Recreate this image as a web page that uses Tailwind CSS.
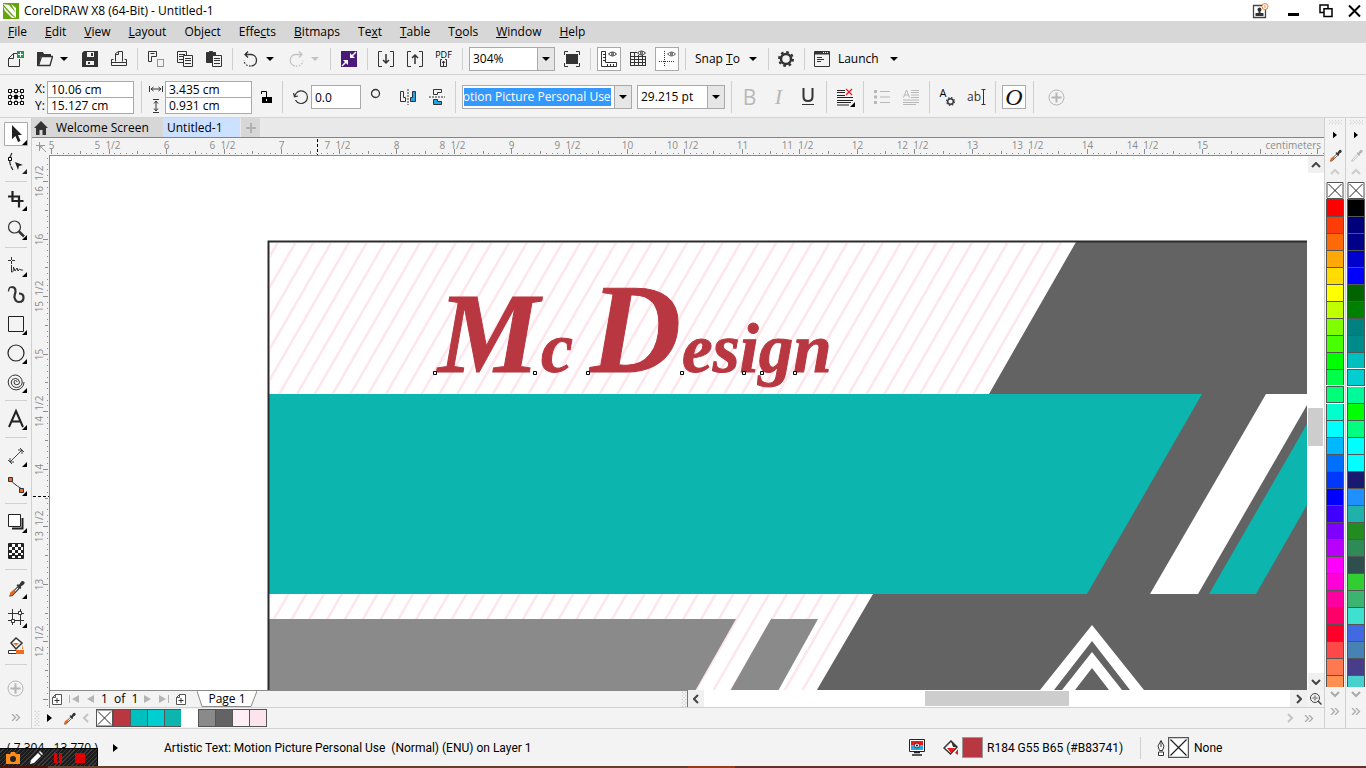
<!DOCTYPE html>
<html lang="en">
<head>
<meta charset="utf-8">
<title>CorelDRAW X8 (64-Bit) - Untitled-1</title>
<script src="https://cdn.jsdelivr.net/npm/@tailwindcss/browser@4"></script>
</head>
<body class="flex h-screen flex-col overflow-hidden bg-[#f3f3f3] font-['Open_Sans','Noto_Sans',sans-serif] text-[12px] leading-4 text-black">

<svg class="hidden">
  <symbol id="drop" viewBox="0 0 16 16"><path d="M2.5 13.5L9 6.5l1.500 1.500L4 14.500l-2 .5z" fill="#fff" stroke="#333"/><path d="M1 15l1.500-3.500 3-2.500L7 11l-3 3z" fill="#e8651a"/><path d="M8 5l1-1 1.500.5L12 2q1.500-1.800 3-.5T14.500 4.500L12 6l.5 1.500-1 1z" fill="#333"/></symbol>
  <symbol id="dropgray" viewBox="0 0 16 16"><path d="M2.500 13.500L9 6.500l1.500 1.500L4 14.500l-2 .5z" fill="#f8f8f8" stroke="#b5b5b5"/><path d="M8 5l1-1 1.500.5L12 2q1.500-1.800 3-.5T14.500 4.500L12 6l.5 1.500-1 1z" fill="#b5b5b5"/></symbol>
  <symbol id="caret" viewBox="0 0 10 6"><path d="M1 1h8L5 5z"/></symbol>
  <symbol id="none" viewBox="0 0 17 17"><path d="M.5.5h16v16H.5z" fill="#fff" stroke="#555"/><path d="M2 2l13 13M15 2L2 15" stroke="#222"/></symbol>
  <symbol id="dots" viewBox="0 0 18 8"><path d="M1 1h17M3 3h15M1 5h17" stroke="#a9a9a9" stroke-dasharray="1 3"/></symbol>
  <symbol id="vdots" viewBox="0 0 6 18"><path d="M1 1v17M3 3v15M5 1v17" stroke="#a9a9a9" stroke-dasharray="1 3"/></symbol>
  <symbol id="gear" viewBox="0 0 16 16"><circle cx="8" cy="8" r="5" fill="none" stroke="#333" stroke-width="2.500"/><circle cx="8" cy="8" r="7" fill="none" stroke="#333" stroke-width="2" stroke-dasharray="2.750 2.750"/></symbol>
  <symbol id="plus" viewBox="0 0 17 17"><circle cx="8.500" cy="8.500" r="7.500" fill="none" stroke="#b5b5b5"/><path d="M8.500 3.500v10M3.500 8.500h10" stroke="#b5b5b5" stroke-width="2"/></symbol>
  <symbol id="pageadd" viewBox="0 0 10 11"><path d="M3.500.5h6v10h-9v-7zM.5 3.500h3v-3" fill="#fff" stroke="#555"/><path d="M5 4v5M2.500 6.500h5" stroke="#333"/></symbol>
</svg>

<!-- Title bar -->
<header class="flex h-[21px] shrink-0 items-center bg-white pr-[5px]">
  <svg class="ml-[3px] size-4" viewBox="0 0 16 16"><path d="M0 0h16v16H0z" fill="#62a60a"/><path d="M0 1l6 1 7 8v5L9 11zM0 3l8 9 4 3H9L2 8zM8 1l5 4v5z" fill="#fff"/></svg>
  <h1 class="ml-[5px] flex-1">CorelDRAW X8 (64-Bit) - Untitled-1</h1>
  <button aria-label="Account" class="mr-[18px]"><svg class="h-4 w-[17px]" viewBox="0 0 17 16"><path d="M1.500 2.500h12v12h-12z" fill="#fff" stroke="#444" stroke-width="1.300"/><circle cx="7.500" cy="6.500" r="2" fill="#333"/><path d="M6.500 8h2v2h3v3h-8v-3h3z" fill="#333"/><circle cx="13" cy="3.500" r="3" fill="#fff" stroke="#f08030"/><path d="M13 2v3" stroke="#f08030"/></svg></button>
  <button aria-label="Minimize" class="mr-[18px]"><svg class="size-3.5" viewBox="0 0 14 14"><path d="M1 9h11v3H1z"/></svg></button>
  <button aria-label="Restore" class="mr-3.5"><svg class="size-3.5" viewBox="0 0 14 14" fill="none" stroke="#000" stroke-width="1.500"><path d="M4.500 8.500h-3.500v-7.500h8v3.500M5 4.800h8V12.500H5z"/></svg></button>
  <button aria-label="Close"><svg class="size-3.5" viewBox="0 0 14 14" stroke="#000" stroke-width="2"><path d="M2 1.500l11 11M13 1.500l-11 11"/></svg></button>
</header>

<!-- Menu bar -->
<nav class="flex h-[22px] shrink-0 items-center gap-[18px] bg-[#d7d7d7] pl-2">
  <button><u>F</u>ile</button><button><u>E</u>dit</button><button><u>V</u>iew</button><button><u>L</u>ayout</button><button>Ob<u>j</u>ect</button><button>Effe<u>c</u>ts</button><button><u>B</u>itmaps</button><button>Te<u>x</u>t</button><button><u>T</u>able</button><button>T<u>o</u>ols</button><button><u>W</u>indow</button><button><u>H</u>elp</button>
</nav>

<!-- Standard toolbar -->
<div role="toolbar" aria-label="Standard" class="flex h-8 shrink-0 items-center border-b border-[#d4d4d4] pl-px [&>i]:h-[22px] [&>i]:w-px [&>i]:mx-[4px] [&>i]:mr-[3px] [&>i]:bg-[#cfcfcf] [&>button]:flex [&>button]:h-6 [&>button]:items-center [&>button]:justify-center">
  <button aria-label="New" class="w-[29px]"><svg class="size-4" viewBox="0 0 16 16"><path d="M9 2.500H5.500l-5 5v8h11V8M.5 7.500h5v-5" fill="none" stroke="#333"/><path d="M9 0h7v7H9z" fill="#12a04a"/><path d="M12.500 1v5M10 3.500h5" stroke="#fff"/></svg></button>
  <button aria-label="Open" class="w-[29px]"><svg class="size-4" viewBox="0 0 16 16"><path d="M0 1h6l1 2h7v2H4L1.500 15H0z" fill="#333"/><path d="M4.500 5.500h11l-2.500 9H1.500z" fill="#f3f3f3" stroke="#333" stroke-width="1.300"/></svg></button>
  <button aria-label="Open recent" class="w-4 pr-1.5"><svg class="h-1.5 w-2.5"><use href="#caret"/></svg></button>
  <button aria-label="Save" class="w-[29px]"><svg class="size-4" viewBox="0 0 16 16"><path d="M2 0h14v16H0V2z" fill="#333"/><path d="M5 1h7v5H5zM4 10h8v4H4z" fill="#f3f3f3"/><path d="M9 2h2v3H9zM6 11h2v2H6z" fill="#333"/></svg></button>
  <button aria-label="Print" class="w-[29px]"><svg class="size-4" viewBox="0 0 16 16" fill="none" stroke="#333"><path d="M4.500 10.500v-8l3-2h4v10M4.500 3.500h3v-3M2.500 8.500h-2v6h15v-6h-2M.5 11.500h15"/></svg></button>
  <i></i>
  <button aria-label="Cut" class="w-[29px]"><svg class="size-4" viewBox="0 0 16 16" fill="none" stroke="#333"><path d="M.5.5h8v5h-5v5h-3zM2.500 2.500h4"/><path d="M9.500 8.500v7h6v-7z" stroke-dasharray="1 1"/></svg></button>
  <button aria-label="Copy" class="w-[29px]"><svg class="size-4" viewBox="0 0 16 16" stroke="#333"><path d="M.5.5h9v11h-9z" fill="none"/><path d="M2 3.500h6M2 5.500h6M2 8.500h4"/><path d="M6.500 4.500h9v11h-9z" fill="#f3f3f3"/><path d="M8 7.500h6M8 9.500h6M8 12.500h6"/></svg></button>
  <button aria-label="Paste" class="w-[29px]"><svg class="size-4" viewBox="0 0 16 16" stroke="#333"><path d="M.5 1.500h3v-1h3v1h3v10h-9z" fill="#333"/><path d="M6.500 4.500h9v11h-9z" fill="#f3f3f3"/><path d="M8 7.500h6M8 9.500h6M8 12.500h6"/></svg></button>
  <i></i>
  <button aria-label="Undo" class="w-[29px]"><svg class="size-4" viewBox="0 0 16 16" fill="none" stroke="#333" stroke-width="1.300"><path d="M5 .5l-3 3 3 3M2 3.500h6.500a5.800 5.800 0 010 11.500"/><path d="M7.500 15A6 6 0 011 9.500" stroke-dasharray="1.500 1.500"/></svg></button>
  <button aria-label="Undo list" class="w-4 pr-1.5"><svg class="h-1.5 w-2.5"><use href="#caret"/></svg></button>
  <button aria-label="Redo" class="w-[29px]"><svg class="size-4" viewBox="0 0 16 16" fill="none" stroke="#c4c4c4" stroke-width="1.300"><path d="M11 .5l3 3-3 3M14 3.500H7.500a5.800 5.800 0 00-.5 11.500"/><path d="M8 15a6 6 0 007-5.500" stroke-dasharray="1.500 1.500"/></svg></button>
  <button aria-label="Redo list" class="w-4 pr-1.5"><svg class="h-1.5 w-2.5 fill-[#c4c4c4]"><use href="#caret"/></svg></button>
  <i></i>
  <button aria-label="Search content" class="w-[29px]"><svg class="size-4" viewBox="0 0 16 16"><path d="M0 0h16v16H0z" fill="#4b1a7a"/><path d="M15 1l-4 4M1 15l4-4" stroke="#fff" stroke-width="1.500"/><path d="M9 2v5h5zM2 9h5v5z" fill="#fff"/></svg></button>
  <i></i>
  <button aria-label="Import" class="w-[29px]"><svg class="size-4" viewBox="0 0 16 16" fill="none" stroke="#333"><path d="M4 .5H.5v15H4M12 .5h3.500v15H12"/><path d="M8 3v9M5 9l3 3 3-3" stroke-width="1.500"/></svg></button>
  <button aria-label="Export" class="w-[29px]"><svg class="size-4" viewBox="0 0 16 16" fill="none" stroke="#333"><path d="M4 .5H.5v15H4M12 .5h3.500v15H12"/><path d="M8 4v9M5 7l3-3 3 3" stroke-width="1.500"/></svg></button>
  <button aria-label="Publish to PDF" class="w-[29px] flex-col"><span class="text-[9px] leading-[8px]">PDF</span><svg class="h-2 w-[7px]" viewBox="0 0 7 8" fill="none" stroke="#333"><path d="M2 .5H.5v7h6v-7H5M3.500 7V2M2 4l1.500-2L5 4"/></svg></button>
  <i></i>
  <div class="relative ml-[3px] h-6 w-[86px]">
    <select aria-label="Zoom level" class="h-6 w-full appearance-none border border-[#a9a9a9] bg-white pl-[3px]"><option>304%</option></select>
    <span class="pointer-events-none absolute inset-y-px right-px flex w-[17px] items-center justify-center border-l border-[#a9a9a9] bg-[#e6e6e6]"><svg class="h-1.5 w-2.5"><use href="#caret"/></svg></span>
  </div>
  <button aria-label="Full-screen preview" class="ml-[2px] w-[29px]"><svg class="size-4" viewBox="0 0 16 16"><path d="M2 3h12v10H2z" fill="#333"/><path d="M.5 4V.5H4M12 .5h3.500V4M.5 12v3.500H4M12 15.500h3.500V12" fill="none" stroke="#333"/></svg></button>
  <i></i>
  <button aria-label="Show rulers" class="mx-[3px] w-6 border border-[#a9a9a9] bg-white"><svg class="size-[18px]" viewBox="0 0 18 18" fill="none" stroke="#333"><path d="M1.500 1.500h4v11h11v4h-15zM3 4.500h2M3 7.500h2M3 10.500h2M7.500 14v2M10.500 14v2M13.500 14v2"/><path d="M8.500 4q4-4 8 0q-4 4-8 0z"/><circle cx="12.500" cy="4" r="1"/></svg></button>
  <button aria-label="Show grid" class="w-7"><svg class="size-[18px]" viewBox="0 0 18 18" fill="none" stroke="#333"><path d="M1.500 2v14M5.500 2v14M9.500 5v11M13.500 5v11M16.500 6v10M1 2.500h7M1 6.500h16M1 9.500h16M1 12.500h16M1 15.500h16"/><path d="M8.500 3q4-4 8 0q-4 4-8 0z" fill="#f3f3f3"/><circle cx="12.500" cy="3" r="1"/></svg></button>
  <button aria-label="Show guidelines" class="mx-[3px] w-6 border border-[#a9a9a9] bg-white"><svg class="size-[18px]" viewBox="0 0 18 18" fill="none" stroke="#333"><path d="M6.500 1v16M1 11.500h16" stroke-dasharray="1 1"/><path d="M9.500 4q4-4 8 0q-4 4-8 0z" stroke-width=".8"/><circle cx="13.500" cy="4" r="1"/></svg></button>
  <i class="!ml-[3px]"></i>
  <button class="gap-2 px-1.5"><span>Snap <u>T</u>o</span><svg class="h-1.5 w-2.5"><use href="#caret"/></svg></button>
  <i></i>
  <button aria-label="Options" class="w-[29px]"><svg class="size-4"><use href="#gear"/></svg></button>
  <i class="!ml-[3px]"></i>
  <button class="gap-2 pl-1.5"><svg class="size-4" viewBox="0 0 16 16" fill="none" stroke="#333"><path d="M.5.5h15v15H.5z"/><path d="M1 2h14" stroke-width="3"/><path d="M9 1.500h6" stroke="#fff" stroke-dasharray="1 1"/><path d="M3 6.500h5M3 8.500h7M3 10.500h4"/></svg>Launch<svg class="ml-0.5 h-1.5 w-2.5"><use href="#caret"/></svg></button>
</div>

<!-- Property bar -->
<div role="toolbar" aria-label="Properties" class="flex h-[43px] shrink-0 items-center border-b border-[#d4d4d4] pl-px pt-[2px] [&>i]:h-8 [&>i]:w-px [&>i]:mx-[4px] [&>i]:mr-[3px] [&>i]:bg-[#cfcfcf] [&>button]:flex [&>button]:h-6 [&>button]:items-center [&>button]:justify-center">
  <button aria-label="Object origin" class="w-[29px]"><svg class="size-4" viewBox="0 0 16 16" fill="none" stroke="#000"><path d="M2 2.500h12M2 7.500h12M2 13.500h12M2.500 2v12M8 2v12M13.500 2v12" stroke="#777"/><path d="M.5.5h3v3h-3zM6.500.5h3v3h-3zM12.500.5h3v3h-3zM.5 6.500h3v3h-3zM12.500 6.500h3v3h-3zM.5 12.500h3v3h-3zM6.500 12.500h3v3h-3zM12.500 12.500h3v3h-3z" fill="#f3f3f3"/><path d="M6.500 6.500h3v3h-3z" fill="#000"/></svg></button>
  <div class="ml-[5px] grid grid-cols-[12px_87px] items-center leading-4">
    <label for="px">X:</label><input id="px" value="10.06 cm" class="h-[17px] border border-[#a9a9a9] bg-white px-[3px]">
    <label for="py">Y:</label><input id="py" value="15.127 cm" class="-mt-px h-[17px] border border-[#a9a9a9] bg-white px-[3px]">
  </div>
  <i class="!ml-[7px]"></i>
  <div class="ml-1 grid grid-cols-[16px_87px] items-center leading-4">
    <label for="ow" aria-label="Width"><svg class="size-3.5" viewBox="0 0 14 14" fill="none" stroke="#333"><path d="M.5 4v6M13.500 4v6M2 7h10M4.500 5L2 7l2.500 2M9.500 5L12 7 9.500 9"/></svg></label><input id="ow" value="3.435 cm" class="h-[17px] border border-[#a9a9a9] bg-white px-[3px]">
    <label for="oh" aria-label="Height"><svg class="size-3.5" viewBox="0 0 14 14" fill="none" stroke="#333"><path d="M4 .5h6M4 13.500h6M7 2v10M5 4.500L7 2l2 2.500M5 9.500L7 12l2-2.500"/></svg></label><input id="oh" value="0.931 cm" class="-mt-px h-[17px] border border-[#a9a9a9] bg-white px-[3px]">
  </div>
  <button aria-label="Lock ratio" class="w-7"><svg class="h-3.5 w-3" viewBox="0 0 12 14"><path d="M2 7h10v6H2z"/><path d="M1.500 4V1.500h5V7" fill="none" stroke="#000"/><path d="M6.500 9v2" stroke="#fff"/></svg></button>
  <i class="!mx-[2px]"></i>
  <label for="rot" aria-label="Rotation" class="ml-2"><svg class="size-4" viewBox="0 0 16 16" fill="none" stroke="#333" stroke-width="1.200"><path d="M2.500 11A6.300 6.300 0 103 4.500l-1.500 3M.5 4l1 3.800L5 7"/></svg></label>
  <input id="rot" value="0.0" class="ml-[2px] h-6 w-[50px] border border-[#a9a9a9] bg-white px-[3px]">
  <svg class="ml-[9px] mb-2 size-[11px]" viewBox="0 0 11 11"><circle cx="5.500" cy="5.500" r="4" fill="none" stroke="#333" stroke-width="1.300"/></svg>
  <button aria-label="Mirror horizontally" class="ml-3 w-[29px]"><svg class="size-4" viewBox="0 0 16 16" fill="none" stroke="#333"><path d="M.5 2.500h3v6h2v4h-5z"/><path d="M8 0v16" stroke-dasharray="2 1"/><path d="M15.500 2.500h-3v6h-2v4h5z" fill="#22a5e6"/></svg></button>
  <button aria-label="Mirror vertically" class="w-[29px]"><svg class="size-4" viewBox="0 0 16 16" fill="none" stroke="#333"><path d="M4.500.5h8v3h-4v2h-4z"/><path d="M0 8h16" stroke-dasharray="2 1"/><path d="M4.500 10.500h4v2h4v3h-8z" fill="#22a5e6"/></svg></button>
  <i></i>
  <div class="relative ml-[3px] h-6 w-[170px]">
    <div class="h-6 overflow-hidden border border-[#a9a9a9] bg-white py-[2px] pl-px pr-[20px]"><select aria-label="Font" class="block h-[18px] w-full appearance-none bg-[#3399ff] indent-[-12px] leading-[18px] text-white"><option>Motion Picture Personal Use</option></select></div>
    <span class="pointer-events-none absolute inset-y-px right-px flex w-[17px] items-center justify-center border-l border-[#a9a9a9] bg-[#e6e6e6]"><svg class="h-1.5 w-2.5"><use href="#caret"/></svg></span>
  </div>
  <div class="relative ml-[5px] h-6 w-[88px]">
    <select aria-label="Font size" class="h-6 w-full appearance-none border border-[#a9a9a9] bg-white pl-[3px]"><option>29.215 pt</option></select>
    <span class="pointer-events-none absolute inset-y-px right-px flex w-[17px] items-center justify-center border-l border-[#a9a9a9] bg-[#e6e6e6]"><svg class="h-1.5 w-2.5"><use href="#caret"/></svg></span>
  </div>
  <i class="!ml-[6px]"></i>
  <button aria-label="Bold" class="w-[29px] text-[21px] font-medium text-[#b8b8b8]">B</button>
  <button aria-label="Italic" class="w-[29px] font-['Liberation_Serif',serif] text-[22px] italic text-[#b8b8b8]">I</button>
  <button aria-label="Underline" class="w-[29px]"><svg class="h-[18px] w-3.5" viewBox="0 0 14 18" fill="none" stroke="#333"><path d="M2.500 0v8.500q0 4.500 4.500 4.500t4.500-4.500V0" stroke-width="2"/><path d="M1 16.500h12"/></svg></button>
  <i></i>
  <button aria-label="Text alignment" class="w-[29px]"><svg class="size-5" viewBox="0 0 20 20"><path d="M2 3.500h8M2 5.500h8M2 8.500h8M2 10.500h16M2 13.500h16M2 15.500h14M2 18h12" stroke="#222"/><path d="M11 2l6 6M17 2l-6 6" stroke="#f01020" stroke-width="1.200"/><path d="M20 15v5h-5z"/></svg></button>
  <i></i>
  <button aria-label="Bulleted list" class="w-[29px]"><svg class="size-4" viewBox="0 0 16 16"><path d="M0 1h3v3H0zM0 6.500h3v3H0zM0 12h3v3H0z" fill="#b8b8b8"/><path d="M6 2.500h10M6 8h10M6 13.500h10" stroke="#b8b8b8"/></svg></button>
  <button aria-label="Drop cap" class="w-[29px]"><svg class="size-4" viewBox="0 0 16 16" fill="none" stroke="#b8b8b8"><path d="M.5 8.500L3.500 1l3 7.500M1.500 6h4M8 1.500h8M8 3.500h8M8 6h8M8 8.500h8M0 11h16M0 13.500h16M0 15.500h13"/></svg></button>
  <i></i>
  <button aria-label="Text properties" class="w-[29px]"><span class="mb-2 text-[11px]">A</span><svg class="mt-2 size-[9px]"><use href="#gear"/></svg></button>
  <button aria-label="Edit text" class="w-[29px] text-[#333]">ab<svg class="h-4 w-[5px]" viewBox="0 0 5 16" fill="none" stroke="#333"><path d="M.5.5h4M.5 15.500h4M2.500 1v14"/></svg></button>
  <i></i>
  <button aria-label="OpenType" class="mx-[3px] w-6 border border-[#a9a9a9] bg-white font-['Liberation_Serif',serif] text-[24px] italic text-[#111]">O</button>
  <i></i>
  <button aria-label="Quick customize" class="ml-[5px] w-[29px]"><svg class="size-[17px]"><use href="#plus"/></svg></button>
</div>

<!-- Workspace -->
<main class="flex min-h-0 flex-1">
  <div role="toolbar" aria-label="Toolbox" class="flex w-8 shrink-0 flex-col items-center border-r border-[#d0d0d0] pt-px [&>i]:h-px [&>i]:w-[22px] [&>i]:my-[4px] [&>i]:mb-[3px] [&>i]:shrink-0 [&>i]:bg-[#d0d0d0] [&>button]:flex [&>button]:h-[29px] [&>button]:shrink-0 [&>button]:items-center [&>button]:w-full [&>button]:justify-center">
    <button aria-label="Pick"><svg class="size-6" viewBox="0 0 24 24"><path d="M.5.5h23v23H.5z" fill="#fff" stroke="#a9a9a9"/><path d="M8 3v14l3.500-3 2.500 6 2.500-1-2.500-6h4z" fill="#222"/><path d="M23 18v5h-5z"/></svg></button>
    <button aria-label="Shape"><svg class="size-6" viewBox="0 0 24 24"><path d="M8 2Q3 10 9 19" fill="none" stroke="#333" stroke-width="1.300" stroke-dasharray="6 1"/><path d="M4.500 6.500h3v3h-3z" fill="#fff" stroke="#000"/><path d="M11 11l8 3-4 1-1 4zM23 18v5h-5z" fill="#222"/></svg></button>
    <i></i>
    <button aria-label="Crop"><svg class="size-6" viewBox="0 0 24 24"><path d="M8.500 3v10h11M4 8.500h11v11" fill="none" stroke="#222" stroke-width="2.200"/><path d="M23 18v5h-5z"/></svg></button>
    <button aria-label="Zoom"><svg class="size-6" viewBox="0 0 24 24"><circle cx="10.500" cy="10" r="6" fill="none" stroke="#333" stroke-width="1.200"/><path d="M15 14.500l5 5" stroke="#333" stroke-width="2.500"/><path d="M23 18v5h-5z"/></svg></button>
    <i></i>
    <button aria-label="Freehand"><svg class="size-6" viewBox="0 0 24 24" fill="none" stroke="#333"><path d="M7.500 3v3m0 1v3M4 6.500h3m1 0h3M7.500 11v7q2 1 2-5l1.500 4 2-3 1 3 1.500-2 1.500 1h2"/><path d="M23 18v5h-5z" fill="#000" stroke="none"/></svg></button>
    <button aria-label="Artistic media"><svg class="size-6" viewBox="0 0 24 24" fill="none" stroke="#333"><path d="M4.500 8.500q0-4.500 3.500-4.500" stroke-width="1.300"/><path d="M7.500 4q4 0 4 4 0 2-.8 4t.3 4q1 3 4 3 4.500 0 4.500-4.500 0-4-4.500-4" stroke-width="2.200"/></svg></button>
    <button aria-label="Rectangle"><svg class="size-6" viewBox="0 0 24 24"><path d="M4.500 4.500h15v15h-15z" fill="none" stroke="#222"/><path d="M23 18v5h-5z"/></svg></button>
    <button aria-label="Ellipse"><svg class="size-6" viewBox="0 0 24 24"><circle cx="12" cy="12" r="8" fill="none" stroke="#222" stroke-width="1.200"/><path d="M23 18v5h-5z"/></svg></button>
    <button aria-label="Spiral"><svg class="size-6" viewBox="0 0 24 24"><path d="M13 12a1.500 1.500 0 00-3 0a2.700 2.700 0 005.500 0a4.200 4.200 0 00-8.300 0a5.500 5.500 0 0011 0a7 7 0 00-14 0a7.900 7.900 0 0015.800 0" fill="none" stroke="#333"/><path d="M23 18v5h-5z"/></svg></button>
    <i></i>
    <button aria-label="Text"><svg class="size-6" viewBox="0 0 24 24"><path d="M5 20L12 4l7 16M7.500 14.500h9" fill="none" stroke="#222" stroke-width="2"/><path d="M23 18v5h-5z"/></svg></button>
    <i></i>
    <button aria-label="Dimension"><svg class="size-6" viewBox="0 0 24 24" fill="none" stroke="#444"><path d="M6 18L18 6M4 16l4 4M16 4l4 4M6 14v4h4M14 6h4v4"/><path d="M23 18v5h-5z" fill="#000" stroke="none"/></svg></button>
    <button aria-label="Connector"><svg class="size-6" viewBox="0 0 24 24" stroke="#333"><path d="M6 6q2 4 12 10" fill="none"/><path d="M4.500 4.500h4v4h-4zM15.500 15.500h4v4h-4z" fill="#f26a1b"/><path d="M23 18v5h-5z" stroke="none"/></svg></button>
    <i></i>
    <button aria-label="Drop shadow"><svg class="size-6" viewBox="0 0 24 24" fill="none" stroke="#222"><path d="M18.500 8v10.500H8" stroke-width="2"/><path d="M4.500 4.500h12v12h-12z" fill="#fff"/><path d="M23 18v5h-5z" fill="#000" stroke="none"/></svg></button>
    <button aria-label="Transparency"><svg class="size-4" viewBox="0 0 16 16"><path d="M.5.5h15v15H.5z" fill="#fff" stroke="#222"/><path d="M1 2.500h14M1 8.500h14M1 13.500h14" stroke="#222" stroke-width="3" stroke-dasharray="3 3"/><path d="M4 5.500h11M4 11.500h11" stroke="#222" stroke-width="3" stroke-dasharray="3 3"/></svg></button>
    <i></i>
    <button aria-label="Color eyedropper"><svg class="size-6" viewBox="0 0 24 24"><use href="#drop" x="4" y="4" width="17" height="17"/><path d="M23 18v5h-5z"/></svg></button>
    <button aria-label="Mesh fill"><svg class="size-6" viewBox="0 0 24 24" fill="none" stroke="#333"><path d="M8.500 4v16M16.500 4v16M4 8.500h16M4 15.500h16"/><path d="M14.500 6.500h3v3h-3zM7.500 14.500h3v3h-3z" fill="#fff"/><path d="M23 18v5h-5z" fill="#000" stroke="none"/></svg></button>
    <button aria-label="Smart fill"><svg class="size-6" viewBox="0 0 24 24"><path d="M7 9l5-5 6 5-6 6z" fill="#fff" stroke="#333" stroke-width="1.500"/><path d="M9 9h6l-3 3zM19 10v5h-1z" fill="#f26a1b"/><path d="M4.500 16.500h15v3h-15z" fill="#fff" stroke="#333"/><path d="M12 16h8v4h-8z" fill="#f26a1b"/></svg></button>
    <i></i>
    <button aria-label="Customize toolbox" class="mt-1.5"><svg class="size-[17px]"><use href="#plus"/></svg></button>
    <button aria-label="More tools"><svg class="h-[7px] w-2.5" viewBox="0 0 10 7" fill="none" stroke="#aaa" stroke-width="1.300"><path d="M1 0l3.500 3.500L1 7M5 0l3.500 3.500L5 7"/></svg></button>
  </div>

  <section class="flex min-w-0 flex-1 flex-col">
    <div role="tablist" class="flex h-5 shrink-0 items-stretch border-b border-[#1ea4e8] bg-[#e9e9e9]">
      <button role="tab" class="flex w-[131px] items-center gap-2 bg-[#d7d7d7] pl-[2px]"><svg class="size-3.5" viewBox="0 0 14 14"><path d="M7 0l7 7h-2v7H8.500V9h-3v5H2V7H0z" fill="#333"/></svg>Welcome Screen</button>
      <button role="tab" aria-selected="true" class="w-[77px] bg-[#cce0ff] pl-1 text-left">Untitled-1</button>
      <button aria-label="New document" class="ml-px flex w-[19px] items-center justify-center bg-[#d7d7d7]"><svg class="size-2.5" viewBox="0 0 10 10" stroke="#b0b0b0" stroke-width="2"><path d="M5 0v10M0 5h10"/></svg></button>
    </div>
    <svg id="hruler" class="block h-[18px] w-full shrink-0 bg-[#f3f3f3] text-[10px]"></svg>
    <div class="flex min-h-0 flex-1">
      <svg id="vruler" class="block h-full w-[18px] shrink-0 bg-[#f3f3f3] text-[10px]"></svg>
      <div class="flex min-w-0 flex-1 flex-col">
        <div class="flex min-h-0 flex-1">
          <svg class="block h-full min-w-0 flex-1 bg-white" role="img" aria-label="Drawing page">
            <defs><pattern id="hatch" width="17.800" height="40" patternUnits="userSpaceOnUse" patternTransform="translate(276 243) skewX(-30)"><path d="M0 0h3v40H0z" fill="#fde6ec"/></pattern></defs>
            <g transform="translate(-50 -156)">
              <path d="M268 241h1039v460H268z" fill="#fff"/>
              <path d="M270 243h806L809 704H270z" fill="url(#hatch)"/>
              <path d="M1076 242H1307V700H811L873 594 989 394z" fill="#636363"/>
              <path d="M269 394H1202L1087 594H269z" fill="#0cb5ae"/>
              <path d="M1266 394H1307V405L1198 594H1150z" fill="#fff"/>
              <path d="M1307 424V505L1256 594H1209z" fill="#0cb5ae"/>
              <path d="M269 619H736L690 700H269zM771 619H818L773 700H725z" fill="#8a8a8a"/>
              <path d="M1092 625L1040 690H1054L1092 641 1130 690H1144zM1092 652L1062 690H1075L1092 668 1109 690H1122z" fill="#fff"/>
              <path d="M268.500 701V241.500H1307" fill="none" stroke="#2b2b2b" stroke-width="2"/>
              <text y="372" fill="#b83741" stroke="#b83741" stroke-width="1" class="font-['Liberation_Serif',serif] font-bold italic"><tspan x="438" class="text-[114px]">M</tspan><tspan x="541" class="text-[72px]">c</tspan><tspan class="text-[48px]"> </tspan><tspan x="590" class="text-[126px]">D</tspan><tspan x="682" class="text-[69px]">esign</tspan></text>
              <path d="M433.500 371.500h3v3h-3zM533.500 371.500h3v3h-3zM586.500 371.500h3v3h-3zM680.500 371.500h3v3h-3zM742.500 371.500h3v3h-3zM760.500 371.500h3v3h-3zM793.500 371.500h3v3h-3z" fill="#fff" stroke="#000"/>
            </g>
          </svg>
          <div class="flex w-4 shrink-0 flex-col bg-white" aria-label="Vertical scroll">
            <button aria-label="Scroll up" class="flex h-[17px] items-center justify-center bg-[#f0f0f0]"><svg class="h-1.5 w-2.5" viewBox="0 0 10 6" fill="none" stroke="#444" stroke-width="2"><path d="M1 5l4-4 4 4"/></svg></button>
            <div class="flex-[235]"></div><div class="mr-px h-[38px] bg-[#cdcdcd]"></div><div class="flex-[227]"></div>
            <button aria-label="Scroll down" class="flex h-[17px] items-center justify-center bg-[#f0f0f0]"><svg class="h-1.5 w-2.5" viewBox="0 0 10 6" fill="none" stroke="#444" stroke-width="2"><path d="M1 1l4 4 4-4"/></svg></button>
          </div>
        </div>
        <!-- Page navigator -->
        <div class="flex h-[18px] shrink-0 items-stretch border-b border-[#d0d0d0]">
          <div class="flex flex-[635] items-center gap-[7px] border-t border-[#8a8a8a] pl-[2px]">
            <button aria-label="Add page before"><svg class="block h-[11px] w-2.5"><use href="#pageadd"/></svg></button>
            <button aria-label="First page"><svg class="block h-2 w-2.5" viewBox="0 0 10 8" fill="#b5b5b5"><path d="M0 0h1v8H0zM10 0v8L3 4z"/></svg></button>
            <button aria-label="Previous page"><svg class="block h-2 w-2" viewBox="0 0 8 8" fill="#b5b5b5"><path d="M8 0v8L1 4z"/></svg></button>
            <span class="w-9 whitespace-nowrap">1&nbsp; of&nbsp; 1</span>
            <button aria-label="Next page"><svg class="block h-2 w-2" viewBox="0 0 8 8" fill="#b5b5b5"><path d="M0 0v8l7-4z"/></svg></button>
            <button aria-label="Last page"><svg class="block h-2 w-2.5" viewBox="0 0 10 8" fill="#b5b5b5"><path d="M9 0h1v8H9zM0 0v8l7-4z"/></svg></button>
            <button aria-label="Add page after"><svg class="block h-[11px] w-2.5"><use href="#pageadd"/></svg></button>
            <button class="relative -mt-px ml-1 h-4 w-[60px]"><svg class="absolute inset-0 h-4 w-[60px]" viewBox="0 0 60 16"><path d="M0 0L5 15.500H54L60 0z" fill="#fff"/><path d="M0 0L5 15.500H54L60 0" fill="none" stroke="#8a8a8a"/></svg><span class="relative">Page 1</span></button>
            <svg class="ml-auto h-4 w-1.5"><use href="#vdots"/></svg>
          </div>
          <button aria-label="Scroll left" class="flex w-[17px] items-center justify-center border-l border-[#777] bg-[#f0f0f0]"><svg class="h-2.5 w-1.5" viewBox="0 0 6 10" fill="none" stroke="#444" stroke-width="2"><path d="M5 1L1 5l4 4"/></svg></button>
          <div class="flex flex-[586] bg-white"><div class="flex-[221]"></div><div class="my-px flex-[144] bg-[#cdcdcd]"></div><div class="flex-[221]"></div></div>
          <button aria-label="Scroll right" class="flex w-[17px] items-center justify-center bg-[#f0f0f0]"><svg class="h-2.5 w-1.5" viewBox="0 0 6 10" fill="none" stroke="#444" stroke-width="2"><path d="M1 1l4 4-4 4"/></svg></button>
          <button aria-label="Navigator" class="flex w-[17px] items-center justify-center"><svg class="size-3" viewBox="0 0 12 12" fill="none" stroke="#444"><circle cx="5" cy="5" r="4.500"/><path d="M5 2.500v5M2.500 5h5" stroke-dasharray="2 1"/><path d="M8 8l3.500 3.500" stroke-width="1.500"/></svg></button>
        </div>
      </div>
    </div>
    <!-- Document palette -->
    <div class="flex h-5 shrink-0 items-center pl-0.5">
      <svg class="h-4 w-1.5"><use href="#vdots"/></svg>
      <button aria-label="Palette menu" class="ml-[7px]"><svg class="block h-2 w-[5px]" viewBox="0 0 5 8"><path d="M0 0v8l5-4z"/></svg></button>
      <button aria-label="Pick color" class="ml-[11px]"><svg class="block size-[13px]"><use href="#drop"/></svg></button>
      <button aria-label="Previous colors" class="ml-1.5"><svg class="block h-2.5 w-2" viewBox="0 0 8 10" fill="none" stroke="#c4c4c4" stroke-width="2"><path d="M6 1L2 5l4 4"/></svg></button>
      <div id="docpal" class="ml-1.5 flex h-[18px] border-y border-r border-[#555]"></div>
      <span class="flex-1"></span>
      <button aria-label="Next colors"><svg class="block h-2.5 w-2" viewBox="0 0 8 10" fill="none" stroke="#c4c4c4" stroke-width="2"><path d="M2 1l4 4-4 4"/></svg></button>
      <button aria-label="More colors" class="ml-2.5 mr-2.5"><svg class="block h-[7px] w-2.5" viewBox="0 0 10 7" fill="none" stroke="#aaa" stroke-width="1.300"><path d="M1 0l3.500 3.500L1 7M5 0l3.500 3.500L5 7"/></svg></button>
    </div>
  </section>

  <!-- Colour palettes -->
  <aside class="flex shrink-0">
    <div class="flex w-[21px] flex-col items-center border-l border-[#d0d0d0]">
      <svg class="mt-0.5 h-1.5 w-4 shrink-0"><use href="#dots"/></svg>
      <button aria-label="Palette options" class="mt-[5px]"><svg class="block h-2 w-1" viewBox="0 0 5 8"><path d="M0 0v8l5-4z"/></svg></button>
      <button aria-label="Eyedropper" class="mt-2.5"><svg class="block size-[13px]"><use href="#drop"/></svg></button>
      <button aria-label="Scroll palette up" class="mt-1.5"><svg class="block h-[7px] w-2.5" viewBox="0 0 10 7" fill="none" stroke="#ccc" stroke-width="2"><path d="M1 6l4-4 4 4"/></svg></button>
      <div id="pal1" class="mt-[7px] min-h-0 w-[18px] flex-1 overflow-hidden"></div>
      <button aria-label="Scroll palette down" class="mt-1"><svg class="block h-[7px] w-2.5" viewBox="0 0 10 7" fill="none" stroke="#aaa" stroke-width="2"><path d="M1 1l4 4 4-4"/></svg></button>
      <button aria-label="Expand palette" class="mb-[13px] mt-2.5"><svg class="block h-[7px] w-2.5" viewBox="0 0 10 7" fill="none" stroke="#aaa" stroke-width="1.300"><path d="M1 0l3.500 3.500L1 7M5 0l3.500 3.500L5 7"/></svg></button>
    </div>
    <div class="flex w-[21px] flex-col items-center border-l border-[#d0d0d0]">
      <svg class="mt-0.5 h-1.5 w-4 shrink-0"><use href="#dots"/></svg>
      <button aria-label="Palette options" class="mt-[5px]"><svg class="block h-2 w-1" viewBox="0 0 5 8"><path d="M0 0v8l5-4z"/></svg></button>
      <button aria-label="Eyedropper" class="mt-2.5"><svg class="block size-[13px]"><use href="#dropgray"/></svg></button>
      <button aria-label="Scroll palette up" class="mt-1.5"><svg class="block h-[7px] w-2.5" viewBox="0 0 10 7" fill="none" stroke="#ccc" stroke-width="2"><path d="M1 6l4-4 4 4"/></svg></button>
      <div id="pal2" class="mt-[7px] min-h-0 w-[18px] flex-1 overflow-hidden"></div>
      <button aria-label="Scroll palette down" class="mt-1"><svg class="block h-[7px] w-2.5" viewBox="0 0 10 7" fill="none" stroke="#aaa" stroke-width="2"><path d="M1 1l4 4 4-4"/></svg></button>
      <button aria-label="Expand palette" class="mb-[13px] mt-2.5"><svg class="block h-[7px] w-2.5" viewBox="0 0 10 7" fill="none" stroke="#aaa" stroke-width="1.300"><path d="M1 0l3.500 3.500L1 7M5 0l3.500 3.500L5 7"/></svg></button>
    </div>
  </aside>
</main>

<!-- Status bar -->
<footer class="relative flex h-[38px] shrink-0 items-center border-t border-t-[#d0d0d0] pl-[7px] font-['Roboto',sans-serif]">
  <span class="w-[106px] font-['Open_Sans',sans-serif]">( 7.304 , 13.770 )</span>
  <button aria-label="Status options"><svg class="block h-2 w-[5px]" viewBox="0 0 5 8"><path d="M0 0v8l5-4z"/></svg></button>
  <span class="ml-[46px] flex-[745] whitespace-pre">Artistic Text: Motion Picture Personal Use  (Normal) (ENU) on Layer 1</span>
  <div class="flex flex-[457] items-center">
    <svg class="h-[17px] w-4" viewBox="0 0 16 17"><path d="M.5.5h15v12H.5z" fill="#fff" stroke="#222"/><path d="M2 2h12v4.500H2z" fill="#f01818"/><path d="M2 6.500h12V11H2z" fill="#29a8f0"/><circle cx="8" cy="6.500" r="2.500" fill="#fff" stroke="#333"/><circle cx="8" cy="6.500" r="1"/><path d="M5 13.500h6M3 16h10" stroke="#222" stroke-width="1.500"/></svg>
    <svg class="ml-[18px] size-4" viewBox="0 0 16 16"><path d="M1 8l7-7 6 6-6.500 7z" fill="#fff" stroke="#333" stroke-width="1.500"/><path d="M8 1l6 6h-4z" fill="#333"/><path d="M4 8h8l-4 5zM15 9v6l-3-2z" fill="#f01818"/></svg>
    <span class="ml-[3px] size-[21px] border border-[#999] bg-[#b83741]"></span>
    <span class="ml-1 w-[153px]">R184 G55 B65 (#B83741)</span>
    <span class="mr-4 h-[22px] w-px bg-[#d0d0d0]"></span>
    <svg class="h-4 w-2" viewBox="0 0 8 16" fill="#fff" stroke="#333"><path d="M4 .5L1 6l1.500 4.500h3L7 6zM4 1v6M1.500 12h5v3.500h-5z"/></svg>
    <svg class="ml-[3px] size-[21px]"><use href="#none"/></svg>
    <span class="ml-[5px]">None</span>
  </div>
  <!-- Screen recorder controls floating over the status bar -->
  <div class="absolute bottom-0 left-0 flex h-[18px] w-[98px] items-center gap-[9px] border-r border-t border-black bg-[repeating-linear-gradient(135deg,#1c1c1c_0px,#1c1c1c_2px,#3c3c3c_2px,#3c3c3c_3px)] pl-1.5">
    <button aria-label="Snapshot"><svg class="block h-3 w-3.5" viewBox="0 0 14 12"><path d="M0 2h4l1-2h4l1 2h4v10H0z" fill="#ff8c1a"/><circle cx="7" cy="7" r="3" fill="#222"/></svg></button>
    <button aria-label="Draw"><svg class="block size-3.5" viewBox="0 0 14 14" fill="#fff"><path d="M1 13l1-4 7-7 3 3-7 7zM10 1l1-1 3 3-1 1z"/></svg></button>
    <button aria-label="Pause" class="ml-0.5"><svg class="block h-2.5 w-2" viewBox="0 0 8 10" fill="#e00000"><path d="M0 0h3v10H0zM5 0h3v10H5z"/></svg></button>
    <button aria-label="Stop" class="ml-1"><svg class="block h-2.5 w-2.5" viewBox="0 0 10 10" fill="#e00000"><path d="M0 0h10v10H0z"/></svg></button>
  </div>
</footer>
<!-- Edge of the desktop below the window -->
<div class="flex h-[2px] shrink-0"><span class="flex-[48] bg-[#4a1208]"></span><span class="flex-[640] bg-[#66402f]"></span><span class="flex-[47] bg-[#983a1a]"></span><span class="flex-[631] bg-[#60322a]"></span></div>

<script>
// Horizontal and vertical rulers: one unit is 115.1 pixels, with 20 divisions.
const UNIT = 115.1, GREY = '#8c8c8c';
const label = u => Math.floor(u) + (u % 1 ? '\u00a0\u00a01/2' : '');
const tick = n => n % 10 === 0 ? 11 : n % 5 === 0 ? 13 : 15;
let h = '<path d="M17 17.5H4000" stroke="#8a8a8a"/><path d="M4 7.500h9M7.500 4v9M8 8l6 6M8 11V8h3" stroke="#999" fill="none"/>';
for (let n = 0; n <= 230; n++) {
  const x = Math.round(19 + n * UNIT / 20) + .5;
  h += `<path d="M${x} ${tick(n)}V16" stroke="${GREY}"/>`;
  if (n % 10 === 0 && n <= 200) h += `<text x="${x - (n % 20 ? 2 : 0)}" y="11" text-anchor="middle" fill="${GREY}">${label(5 + n / 20)}</text>`;
}
h += `<path d="M285.500 1V17" stroke="#000" stroke-dasharray="3 2"/><text x="100%" dx="-3" y="11" text-anchor="end" fill="${GREY}">centimeters</text>`;
document.getElementById('hruler').innerHTML = h;
let v = '<path d="M17.500 0V4000" stroke="#8a8a8a"/>';
for (let n = -4; n <= 100; n++) {
  const y = Math.round(25 + n * UNIT / 20) + .5;
  v += `<path d="M${tick(n)} ${y}H16" stroke="${GREY}"/>`;
  if (n % 10 === 0 && n < 90) v += `<text transform="translate(11 ${y}) rotate(-90)" text-anchor="middle" fill="${GREY}">${label(16.5 - n / 20)}</text>`;
}
document.getElementById('vruler').innerHTML = v + '<path d="M1 340.500H17" stroke="#000" stroke-dasharray="3 2"/>';

// Colour swatches
function fill(id, list, marked) {
  document.getElementById(id).innerHTML = '<button aria-label="No color" class="block h-[17px] w-[18px]"><svg class="block h-[17px] w-[18px]"><use href="#none"/></svg></button>' +
    list.split(' ').map((c, i) => `<button aria-label="#${c}" class="${i === marked ? 'block h-[17px] w-[18px] border border-[#555] outline outline-white relative' : 'block h-[17px] w-[18px] border-x border-t border-[#555]'}" style="background:#${c}"></button>`).join('');
}
fill('pal1', 'ff0000 ff3c08 ff6a08 ffa808 ffdc00 ffff00 c0ff00 80ff00 48ff00 00ff00 00ff48 00ff78 00ffcc 00ffff 00b8ff 0070ff 0038ff 0000ff 4000ff 8000ff b800ff ff00ff ff00d8 ff00a0 ff0068 ff0028 ff4848 ff7850 ff9050', 11);
fill('pal2', '000000 00007b 00008b 0000cd 0000ff 006400 008000 008080 008b8b 00bfbf 00ced1 00fa9a 00ff00 00ff7f 00ffff 00ffff 191970 1e90ff 20b2aa 228b22 2e8b57 2f4f4f 32cd32 3cb371 40e0d0 4169e1 4682b4 483d8b 48d1cc', 10);
document.getElementById('docpal').innerHTML = '<button aria-label="No color" class="-mt-px block"><svg class="block h-[18px] w-[17px]"><use href="#none"/></svg></button>' +
  'b83741 00bfbf 00ced1 0cb5ae ffffff 8a8a8a 636363 ffeef5 fce4ec'.split(' ').map((c, i) => `<button aria-label="#${c}" class="${i === 4 ? '-my-px block w-[17px]' : 'block w-[17px] border-l border-[#555]'}" style="background:#${c}"></button>`).join('');
</script>
</body>
</html>
